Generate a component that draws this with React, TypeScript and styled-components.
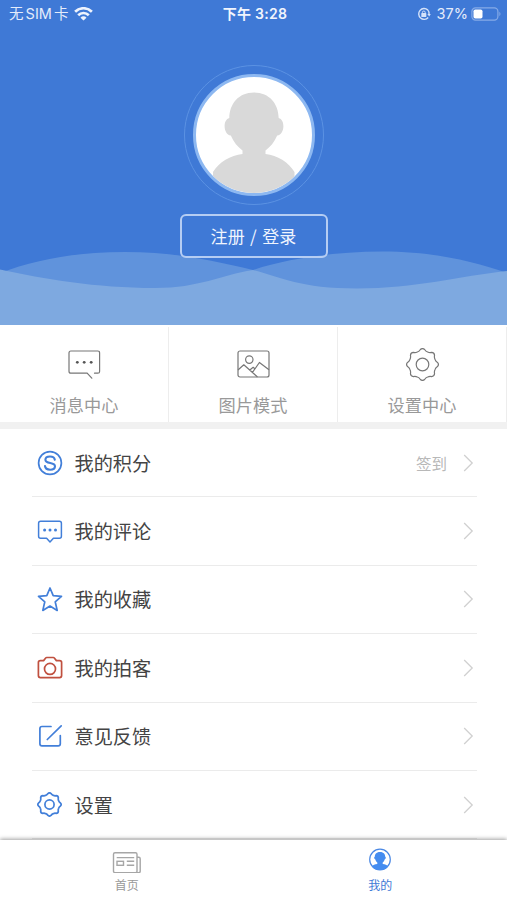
import React from 'react';
import styled, { createGlobalStyle } from 'styled-components';

const GlobalStyle = createGlobalStyle`
  * { box-sizing: border-box; }
  body { margin: 0; background: #fff; }
  button { font: inherit; }
`;

const Page = styled.div`
  display: flex;
  flex-direction: column;
  width: 507px;
  height: 900px;
  overflow: hidden;
  background: #fff;
  font-family: 'Noto Sans CJK SC', sans-serif;
`;

const Hero = styled.header`
  position: relative;
  display: flex;
  flex-direction: column;
  align-items: center;
  flex: none;
  height: 325px;
  background: #3f79d6;
`;

const Waves = styled.svg`
  position: absolute;
  left: 0;
  bottom: 0;
`;

const StatusBar = styled.div`
  display: grid;
  grid-template-columns: 1fr auto 1fr;
  align-items: center;
  width: 100%;
  height: 28px;
  padding: 0 5px 0 9px;
  color: #e4ecfb;
  font-family: Inter, 'Noto Sans CJK SC', sans-serif;
  font-size: 14.5px;
  line-height: 28px;
`;

const StatusGroup = styled.div<{ $end?: boolean }>`
  display: flex;
  align-items: center;
  justify-content: ${(p) => (p.$end ? 'flex-end' : 'flex-start')};
`;

const Carrier = styled.span`
  width: 65px;
  white-space: nowrap;
  word-spacing: -2px;
`;

const Clock = styled.span`
  margin-right: 1px;
  color: #f1f5fd;
  font-size: 14px;
  font-weight: 600;
  letter-spacing: 0.25px;
`;

const Battery = styled.span`
  margin: 0 3px 0 6px;
  font-size: 14.5px;
`;

const AvatarRing = styled.div`
  display: flex;
  align-items: center;
  justify-content: center;
  width: 140px;
  height: 140px;
  margin-top: 37px;
  border: 1px solid #5b92e3;
  border-radius: 50%;
`;

const Avatar = styled.svg`
  border: 3px solid #8db8f1;
  border-radius: 50%;
  background: #fff;
`;

const LoginButton = styled.button`
  position: relative;
  width: 148px;
  height: 44px;
  margin-top: 9px;
  padding: 0 0 1px;
  border: 2px solid #b5cdf3;
  border-radius: 6px;
  background: transparent;
  color: #f0f5fe;
  font-size: 17px;
  line-height: 38px;
  letter-spacing: 0.2px;
  word-spacing: 1.2px;
  white-space: nowrap;
`;

const Shortcuts = styled.nav`
  display: grid;
  grid-template-columns: 169px 169px 169px;
  flex: none;
  height: 104px;
  border-bottom: 7px solid #f1f1f1;
`;

const Shortcut = styled.a`
  display: flex;
  flex-direction: column;
  align-items: center;
  margin-top: 2px;
  padding-top: 21px;
  border-right: 1px solid #ededed;
  color: #999;
  font-size: 17.2px;
  line-height: 26px;

  svg { margin-bottom: 11px; }
`;

const Menu = styled.ul`
  flex: 1;
  min-height: 0;
  margin: 0;
  padding: 0 30px 0 32px;
  overflow: hidden;
  list-style: none;
`;

const MenuRow = styled.li`
  display: flex;
  align-items: center;
  height: 68.4px;
  padding: 0 3px 0 3.500px;
  border-bottom: 1px solid #ebebeb;
`;

const MenuLabel = styled.span`
  flex: 1;
  margin-left: 11px;
  color: #444;
  font-size: 19.2px;
  line-height: 28px;
`;

const MenuNote = styled.span`
  margin-right: 16px;
  color: #b8b8b8;
  font-size: 15.5px;
`;

const TabBar = styled.footer`
  position: relative;
  display: grid;
  grid-template-columns: 1fr 1fr;
  flex: none;
  height: 60px;
  background: #fff;
  box-shadow: 0 -1px 4px rgba(0, 0, 0, 0.38);
`;

const Tab = styled.a<{ $active?: boolean }>`
  display: flex;
  flex-direction: column;
  align-items: center;
  padding-top: 7px;
  color: ${(p) => (p.$active ? '#3f79d6' : '#999')};
  font-size: 12px;
  line-height: 18px;

  svg { margin-bottom: 3px; }
`;

const gearPath = (r: number) => {
  const at = (deg: number, k: number) => {
    const a = (deg * Math.PI) / 180;
    return `${(Math.cos(a) * r * k).toFixed(2)} ${(Math.sin(a) * r * k).toFixed(2)}`;
  };
  let d = `M${at(-8, 0.95)}`;
  for (let i = 0; i < 8; i++) {
    const t = i * 45;
    d += `Q${at(t, 1.06)} ${at(t + 8, 0.95)}Q${at(t + 14, 0.85)} ${at(t + 22.5, 0.85)}Q${at(t + 31, 0.85)} ${at(t + 37, 0.95)}`;
  }
  return `${d}Z`;
};

const Gear = ({ size, hub, color, stroke }: { size: number; hub: number; color: string; stroke: number }) => (
  <svg width={size} height={size} viewBox={`${-size / 2} ${-size / 2} ${size} ${size}`} fill="none" stroke={color} strokeWidth={stroke} strokeLinejoin="round">
    <path d={gearPath(size / 2 - stroke / 2)} />
    <circle r={hub} />
  </svg>
);

const WifiIcon = () => (
  <svg width="19" height="14" viewBox="0 0 19 14" fill="none" stroke="#eef3fd" strokeWidth="2.7">
    <path d="M1.100 4.700a12 12 0 0 1 16.800 0M4.200 8.200a7.500 7.500 0 0 1 10.600 0" />
    <path d="M6.500 10.700a4 4 0 0 1 6 0L9.500 13.600Z" fill="#eef3fd" stroke="none" />
  </svg>
);

const LockIcon = () => (
  <svg width="14" height="14" viewBox="0 0 14 14" fill="none" stroke="#d5e2f9">
    <path d="M10.700 2.900A5.400 5.400 0 1 0 11.200 10.500M10.700 2.900a5.400 5.400 0 0 1 1.300 4.600" strokeWidth="1.400" />
    <path d="m10.400 7 1.800 2.400L13.800 7Z" fill="#d5e2f9" stroke="none" />
    <rect x="4.300" y="6.100" width="5" height="3.900" rx=".6" fill="#d5e2f9" stroke="none" />
    <path d="M5.400 6.700V5.400a1.400 1.400 0 0 1 2.800 0v1.300" />
  </svg>
);

const BatteryIcon = () => (
  <svg width="31" height="14" viewBox="0 0 31 14">
    <rect x=".9" y=".9" width="26" height="12.200" rx="3.600" fill="none" stroke="#86abe7" strokeWidth="1.200" />
    <rect x="2.500" y="2.500" width="9" height="9" rx="1.800" fill="#fff" />
    <path d="M28.400 4.800q2.200 2.200 0 4.400Z" fill="#86abe7" />
  </svg>
);

const MessageIcon = () => (
  <svg width="33" height="33" viewBox="0 0 33 33" fill="none" stroke="#777" strokeWidth="1.200" strokeLinecap="round">
    <path d="M26.500 25.200h3.300q1.800 0 1.800-1.800V5q0-2-1.800-2H2.900Q1 3 1 5v18.200q0 2 1.900 2h16.200l4.700 5" />
    <g fill="#555" stroke="none">
      <circle cx="9.300" cy="14.300" r="1.400" /><circle cx="16.200" cy="14.300" r="1.400" /><circle cx="23.200" cy="14.300" r="1.400" />
    </g>
  </svg>
);

const PictureIcon = () => (
  <svg width="33" height="33" viewBox="0 0 33 33" fill="none" stroke="#777" strokeWidth="1.200" strokeLinejoin="round">
    <rect x="1" y="3" width="31" height="26" rx="2" />
    <circle cx="12.300" cy="11.600" r="3.700" />
    <path d="m1 22 5.800-5.200L20.500 29M12.800 22l3.400-2.700 2 1.800M15.500 24.300l6.900-9.800L32 21.800" />
  </svg>
);

const RowIcon = styled.svg.attrs({ width: 28, height: 28, viewBox: '0 0 28 28' })<{ $red?: boolean }>`
  fill: none;
  stroke: ${(p) => (p.$red ? '#c0503f' : '#427fd9')};
  stroke-width: 1.7;
  stroke-linejoin: round;
  stroke-linecap: round;
`;

const GearSlot = styled.span`
  display: flex;
  justify-content: center;
  width: 28px;
`;

const PointsIcon = () => (
  <RowIcon>
    <circle cx="14" cy="14" r="11.400" />
    <path d="M18.800 10.700C18.400 8.400 16.600 7.500 14 7.500c-2.900 0-4.600 1.300-4.600 3.200 0 4.900 9.600 1.700 9.600 6.500 0 2.200-2 3.500-4.900 3.500-3 0-4.800-1.300-5.100-3.700" strokeWidth="2.100" />
  </RowIcon>
);

const CommentIcon = () => (
  <RowIcon>
    <path d="M4.600 4.200h18.800q2 0 2 2v13q0 2-2 2h-6L14 24.900l-3.400-3.700h-6q-2 0-2-2v-13q0-2 2-2Z" strokeWidth="1.500" />
    <g fill="#427fd9" stroke="none">
      <circle cx="8.600" cy="12.900" r="1.500" /><circle cx="14" cy="12.900" r="1.500" /><circle cx="19.500" cy="12.900" r="1.500" />
    </g>
  </RowIcon>
);

const StarIcon = () => (
  <RowIcon>
    <path d="m14 3 3.200 7.700 8.300.7-6.300 5.400 2 8.600L14 21l-7.200 4.400 2-8.600-6.300-5.400 8.300-.7Z" />
  </RowIcon>
);

const CameraIcon = () => (
  <RowIcon $red>
    <path d="M4.400 6.600h3.200L9.700 4q.4-.5 1-.5h6.600q.6 0 1 .5l2.100 2.600h3.200q2 0 2 2v13q0 2-2 2H4.400q-2 0-2-2v-13q0-2 2-2Z" />
    <circle cx="14" cy="14.900" r="5.500" />
  </RowIcon>
);

const FeedbackIcon = () => (
  <RowIcon>
    <path d="M15 4.500H6Q3.900 4.500 3.900 6.600v15.200q0 2.100 2.100 2.100h16.200q2.100 0 2.100-2.100v-8.300M11.300 17.500 25.200 3.900" />
  </RowIcon>
);

const Chevron = () => (
  <svg width="11" height="18" viewBox="0 0 11 18" fill="none" stroke="#d0d0d0" strokeWidth="1.300">
    <path d="m1.200 1 8 8-8 8" />
  </svg>
);

const NewsIcon = () => (
  <svg width="30" height="26" viewBox="0 0 30 26" fill="none" stroke="#a6a6a6" strokeWidth="1.400">
    <rect x="1.500" y="5.700" width="23.500" height="20" rx="1.500" />
    <path d="M25 10.300h1.700q1.500 0 1.500 1.500v12.400q0 1.500-1.500 1.500H23M4.700 10.600h17.500M14.800 14.300h7.400M14.800 18.200h7.400" />
    <rect x="5" y="14.300" width="6.500" height="4" />
  </svg>
);

const ProfileIcon = () => (
  <svg width="24" height="26" viewBox="0 0 24 26">
    <circle cx="12" cy="12.500" r="10.300" fill="#fff" stroke="#4a88e4" strokeWidth="1.200" />
    <path d="M12 4.900c3.900 0 5.300 2.400 5.100 4.600 1 .4 1 2.300-.3 2.800-.4 1.600-1.300 2.500-2.100 3.200v1.500c2.500.2 4.300 1 5.500 2.400A10 10 0 0 1 12 22.800a10 10 0 0 1-8.200-3.400c1.200-1.400 3-2.200 5.500-2.400v-1.500c-.8-.7-1.700-1.600-2.100-3.200-1.300-.5-1.300-2.400-.3-2.800C6.700 7.300 8.100 4.900 12 4.900Z" fill="#448cf0" />
  </svg>
);

const rows = [
  { label: '我的积分', icon: <PointsIcon />, note: '签到' },
  { label: '我的评论', icon: <CommentIcon /> },
  { label: '我的收藏', icon: <StarIcon /> },
  { label: '我的拍客', icon: <CameraIcon /> },
  { label: '意见反馈', icon: <FeedbackIcon /> },
  { label: '设置', icon: <GearSlot><Gear size={25} hub={4.6} color="#427fd9" stroke={1.7} /></GearSlot> },
];

export default function App() {
  return (
    <>
      <GlobalStyle />
      <Page>
        <Hero>
          <Waves width="507" height="75" viewBox="0 250 507 75">
            <path d="M0 273C35 260 75 252 125 252C175 252 215 261 253 270C285 259 335 251.500 382 251.500C435 251.500 475 262 507 273V325H0Z" fill="#6093dc" />
            <path d="M0 269.500C45 279 95 288 155 288C200 288 220 275 253 270C280 277 300 288.500 357 288.500C415 288.500 460 276 507 271V325H0Z" fill="#7ea9e0" />
          </Waves>
          <StatusBar>
            <StatusGroup><Carrier>无 SIM 卡</Carrier><WifiIcon /></StatusGroup>
            <Clock>下午 3:28</Clock>
            <StatusGroup $end><LockIcon /><Battery>37%</Battery><BatteryIcon /></StatusGroup>
          </StatusBar>
          <AvatarRing>
            <Avatar width="122" height="122" viewBox="0 0 116 116">
              <path d="M58 15.500c15.500 0 24.500 11.500 24.700 25.500 6.500 1.500 6.500 16-1.500 17.500-2.700 6.500-7 11.500-11.700 15v3.500c12 1.500 23 8 29 18V116H17V95c6-10 17.500-16.500 29.500-18v-3.500c-4.700-3.500-9-8.500-11.700-15-8-1.500-8-16-1.500-17.500C33.500 27 42.500 15.500 58 15.500Z" fill="#d9d9d9" />
            </Avatar>
          </AvatarRing>
          <LoginButton>注册 / 登录</LoginButton>
        </Hero>
        <Shortcuts>
          <Shortcut><MessageIcon />消息中心</Shortcut>
          <Shortcut><PictureIcon />图片模式</Shortcut>
          <Shortcut><Gear size={33} hub={6.3} color="#777" stroke={1.2} />设置中心</Shortcut>
        </Shortcuts>
        <Menu>
          {rows.map((row) => (
            <MenuRow key={row.label}>
              {row.icon}
              <MenuLabel>{row.label}</MenuLabel>
              {row.note && <MenuNote>{row.note}</MenuNote>}
              <Chevron />
            </MenuRow>
          ))}
        </Menu>
        <TabBar>
          <Tab><NewsIcon />首页</Tab>
          <Tab $active><ProfileIcon />我的</Tab>
        </TabBar>
      </Page>
    </>
  );
}
